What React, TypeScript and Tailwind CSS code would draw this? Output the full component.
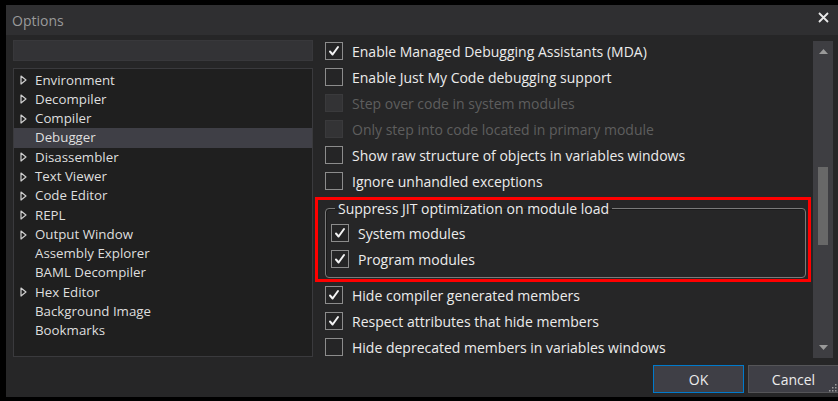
import React from 'react';

const font = { fontFamily: '"Open Sans", "Noto Sans", sans-serif' };

const treeItems: { label: string; expandable: boolean }[] = [
  { label: 'Environment', expandable: true },
  { label: 'Decompiler', expandable: true },
  { label: 'Compiler', expandable: true },
  { label: 'Debugger', expandable: false },
  { label: 'Disassembler', expandable: true },
  { label: 'Text Viewer', expandable: true },
  { label: 'Code Editor', expandable: true },
  { label: 'REPL', expandable: true },
  { label: 'Output Window', expandable: true },
  { label: 'Assembly Explorer', expandable: false },
  { label: 'BAML Decompiler', expandable: false },
  { label: 'Hex Editor', expandable: true },
  { label: 'Background Image', expandable: false },
  { label: 'Bookmarks', expandable: false },
];

const Expander: React.FC = () => (
  <svg width="7" height="10" viewBox="0 0 7 10" className="shrink-0">
    <path d="M1 1 L6 5 L1 9 Z" fill="none" stroke="#d0d0d0" strokeWidth="1.2" strokeLinejoin="round" />
  </svg>
);

const CheckBox: React.FC<{ checked?: boolean; disabled?: boolean }> = ({ checked, disabled }) => (
  <div
    className={
      disabled
        ? 'w-[18px] h-[18px] shrink-0 border border-[#3a3a3c] bg-[#333335]'
        : 'w-[18px] h-[18px] shrink-0 border border-[#8c8c8c] bg-[#252526] flex items-center justify-center'
    }
  >
    {checked && (
      <svg width="12" height="12" viewBox="0 0 12 12">
        <path d="M2 6.5 L4.6 9.5 L10 2" fill="none" stroke="#f4f4f4" strokeWidth="2" strokeLinecap="round" strokeLinejoin="round" />
      </svg>
    )}
  </div>
);

const Option: React.FC<{ label: string; checked?: boolean; disabled?: boolean }> = ({ label, checked, disabled }) => (
  <div className="h-[26px] flex items-center gap-[9px] pl-[10px]">
    <CheckBox checked={checked} disabled={disabled} />
    <span className={disabled ? 'text-[14px] text-[#5e5e5e]' : 'text-[14px] text-[#ececec]'}>{label}</span>
  </div>
);

export default function App() {
  return (
    <div className="w-[838px] h-[401px] bg-black pt-[5px] pl-[6px] pb-[4px] overflow-hidden" style={font}>
      <div className="h-full flex flex-col bg-[#262627]">
        {/* title bar */}
        <div className="h-[30px] shrink-0 bg-[#2f2f31] flex items-center justify-between pl-[6px] pr-[9px]">
          <span className="text-[14px] text-[#9a9a9a]">Options</span>
          <svg width="11" height="11" viewBox="0 0 11 11" className="mb-[6px]">
            <path d="M1 1 L10 10 M10 1 L1 10" stroke="#e8e8e8" strokeWidth="1.8" />
          </svg>
        </div>

        <div className="flex-1 flex">
          {/* left: search + tree */}
          <div className="w-[307px] shrink-0 pl-[7px] pt-[5px] flex flex-col">
            <div className="h-[21px] bg-[#333336] border border-[#38383b]" />
            <div className="mt-[7px] h-[289px] bg-[#1f1f1f] border border-[#3a3a3d] pt-[1.5px]">
              {treeItems.map((item) => (
                <div
                  key={item.label}
                  className={
                    item.label === 'Debugger'
                      ? 'h-[19.3px] flex items-center pl-[6px] bg-[#3f3f46]'
                      : 'h-[19.3px] flex items-center pl-[6px]'
                  }
                >
                  <div className="w-[7px] flex items-center">{item.expandable && <Expander />}</div>
                  <span className="ml-[8px] text-[13.3px] leading-none text-[#dedede]">{item.label}</span>
                </div>
              ))}
            </div>
          </div>

          {/* right: options + buttons */}
          <div className="flex-1 flex flex-col pl-[2px]">
            <div className="flex pt-[3px]">
              <div className="w-[496px] shrink-0">
                <Option label="Enable Managed Debugging Assistants (MDA)" checked />
                <Option label="Enable Just My Code debugging support" />
                <Option label="Step over code in system modules" disabled />
                <Option label="Only step into code located in primary module" disabled />
                <Option label="Show raw structure of objects in variables windows" />
                <Option label="Ignore unhandled exceptions" />

                <div className="h-[88px] pt-[3px]">
                  <div className="h-[85px] border-[3px] border-[#ff0000] pl-[7px] pr-[2px]">
                    <fieldset className="h-[78px] border border-[#7a7a7a] rounded-[4px] shadow-[inset_1px_1px_0_#1a1a1a] pl-[5px] pt-0">
                      <legend className="ml-[4px] px-[3px] text-[14px] leading-[17px] text-[#ececec]">
                        Suppress JIT optimization on module load
                      </legend>
                      <div className="flex flex-col mt-[3px]">
                        <div className="h-[26px] flex items-center gap-[9px]">
                          <CheckBox checked />
                          <span className="text-[14px] text-[#ececec]">System modules</span>
                        </div>
                        <div className="h-[26px] flex items-center gap-[9px]">
                          <CheckBox checked />
                          <span className="text-[14px] text-[#ececec]">Program modules</span>
                        </div>
                      </div>
                    </fieldset>
                  </div>
                </div>

                <Option label="Hide compiler generated members" checked />
                <Option label="Respect attributes that hide members" checked />
                <Option label="Hide deprecated members in variables windows" />
              </div>

              {/* scrollbar */}
              <div className="ml-[2px] mt-[3px] w-[20px] h-[317px] bg-[#3e3e42] flex flex-col items-center">
                <svg width="9" height="5" viewBox="0 0 9 5" className="mt-[8px]">
                  <path d="M0 5 L4.5 0 L9 5 Z" fill="#9a9a9a" />
                </svg>
                <div className="mt-[113px] w-[10px] h-[78px] bg-[#686868]" />
                <div className="flex-1" />
                <svg width="9" height="5" viewBox="0 0 9 5" className="mb-[8px]">
                  <path d="M0 0 L4.5 5 L9 0 Z" fill="#9a9a9a" />
                </svg>
              </div>
            </div>

            {/* buttons */}
            <div className="flex justify-end gap-[4px] mt-[5px] relative">
              <button className="w-[91px] h-[28px] bg-[#3f3f46] border border-[#007acc] text-[14px] text-[#ececec]">OK</button>
              <button className="w-[91px] h-[28px] bg-[#3f3f46] border border-[#555558] text-[14px] text-[#ececec] -mr-[1px]">
                Cancel
              </button>
              <svg width="8" height="8" viewBox="0 0 8 8" className="absolute right-[1px] bottom-[1px]">
                <rect x="6" y="0" width="1.5" height="1.5" fill="#9a9a9a" />
                <rect x="3" y="3" width="1.5" height="1.5" fill="#9a9a9a" />
                <rect x="6" y="3" width="1.5" height="1.5" fill="#9a9a9a" />
                <rect x="0" y="6" width="1.5" height="1.5" fill="#9a9a9a" />
                <rect x="3" y="6" width="1.5" height="1.5" fill="#9a9a9a" />
                <rect x="6" y="6" width="1.5" height="1.5" fill="#9a9a9a" />
              </svg>
            </div>
          </div>
        </div>
      </div>
    </div>
  );
}
